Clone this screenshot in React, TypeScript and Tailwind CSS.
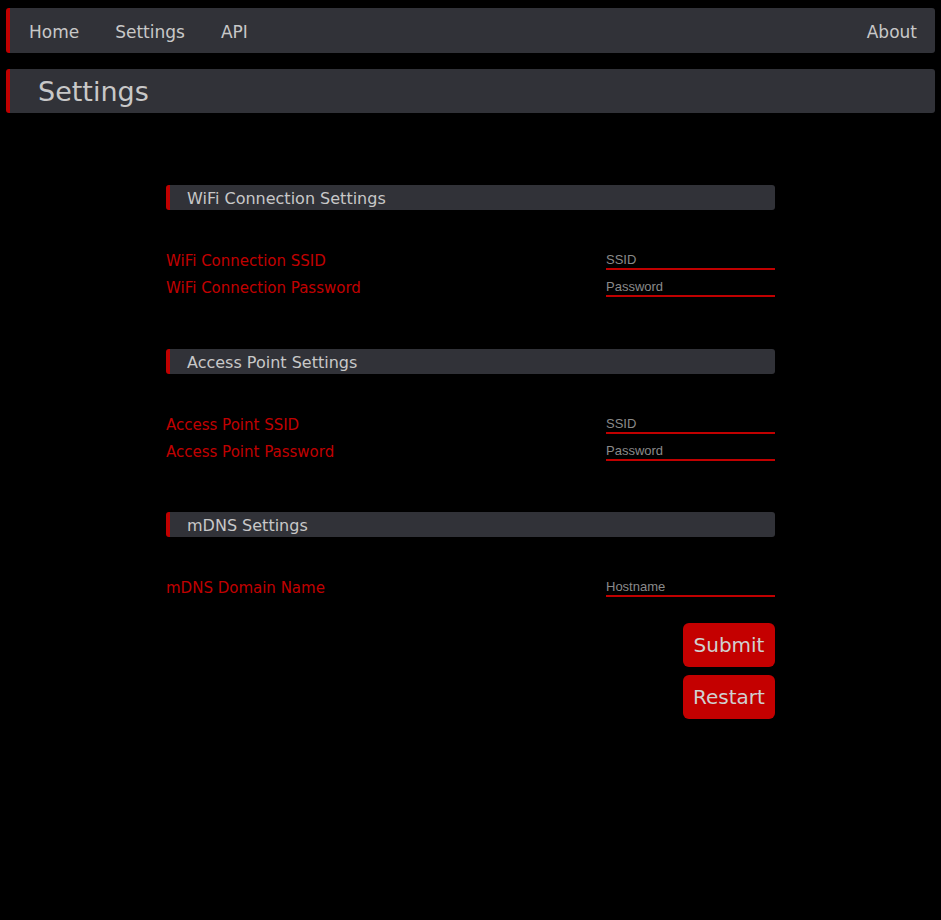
import React from 'react';

const font = { fontFamily: '"DejaVu Sans", Verdana, sans-serif' };

interface Field {
  label: string;
  placeholder: string;
  type?: string;
}

interface Section {
  title: string;
  fields: Field[];
}

const sections: Section[] = [
  {
    title: 'WiFi Connection Settings',
    fields: [
      { label: 'WiFi Connection SSID', placeholder: 'SSID' },
      { label: 'WiFi Connection Password', placeholder: 'Password', type: 'password' },
    ],
  },
  {
    title: 'Access Point Settings',
    fields: [
      { label: 'Access Point SSID', placeholder: 'SSID' },
      { label: 'Access Point Password', placeholder: 'Password', type: 'password' },
    ],
  },
  {
    title: 'mDNS Settings',
    fields: [{ label: 'mDNS Domain Name', placeholder: 'Hostname' }],
  },
];

function SectionHeader({ title }: { title: string }) {
  return (
    <div className="h-[25px] flex items-center rounded-[3px] border-l-4 border-[#c00000] bg-[#313238] pl-[17px] pt-[2px] text-[16px] text-[#c8c8c8]">
      {title}
    </div>
  );
}

function FieldRow({ field }: { field: Field }) {
  return (
    <div className="flex h-[27px] items-end justify-between">
      <label className="mb-[-1px] text-[15px] leading-[20px] text-[#c00000]">{field.label}</label>
      <input
        type={field.type ?? 'text'}
        placeholder={field.placeholder}
        className="h-[22px] w-[169px] border-b-2 border-[#c00000] bg-transparent pt-[2px] text-[13px] text-[#c8c8c8] outline-none placeholder:text-[#8a8a8a]"
        style={{ fontFamily: '"Liberation Sans", Arial, sans-serif' }}
      />
    </div>
  );
}

export default function App() {
  return (
    <div className="min-h-[920px] bg-black px-[6px] pt-[8px]" style={font}>
      <nav className="flex h-[45px] items-center justify-between rounded-[3px] border-l-4 border-[#c00000] bg-[#313238] pl-[19px] pr-[18px] pt-[4px] text-[17px] text-[#c8c8c8]">
        <div className="flex gap-[36px]">
          <a href="#">Home</a>
          <a href="#">Settings</a>
          <a href="#">API</a>
        </div>
        <a href="#">About</a>
      </nav>

      <header className="mt-[16px] flex h-[44px] items-center rounded-[3px] border-l-4 border-[#c00000] bg-[#313238] pl-[28px] pt-[2px] text-[27px] text-[#c8c8c8]">
        Settings
      </header>

      <form className="mx-auto mt-[72px] w-[609px]" onSubmit={(e) => e.preventDefault()}>
        {sections.map((s, i) => (
          <section key={s.title} className={i === 1 ? 'mt-[52px]' : i === 2 ? 'mt-[51px]' : ''}>
            <SectionHeader title={s.title} />
            <div className="mt-[33px]">
              {s.fields.map((f) => (
                <FieldRow key={f.label} field={f} />
              ))}
            </div>
          </section>
        ))}
        <div className="mt-[26px] flex flex-col items-end gap-[8px]">
          <button type="submit" className="h-[44px] w-[92px] rounded-[6px] bg-[#c40000] text-[20px] text-[#d0d0d0]">
            Submit
          </button>
          <button type="button" className="h-[44px] w-[92px] rounded-[6px] bg-[#c40000] text-[20px] text-[#d0d0d0]">
            Restart
          </button>
        </div>
      </form>
    </div>
  );
}
